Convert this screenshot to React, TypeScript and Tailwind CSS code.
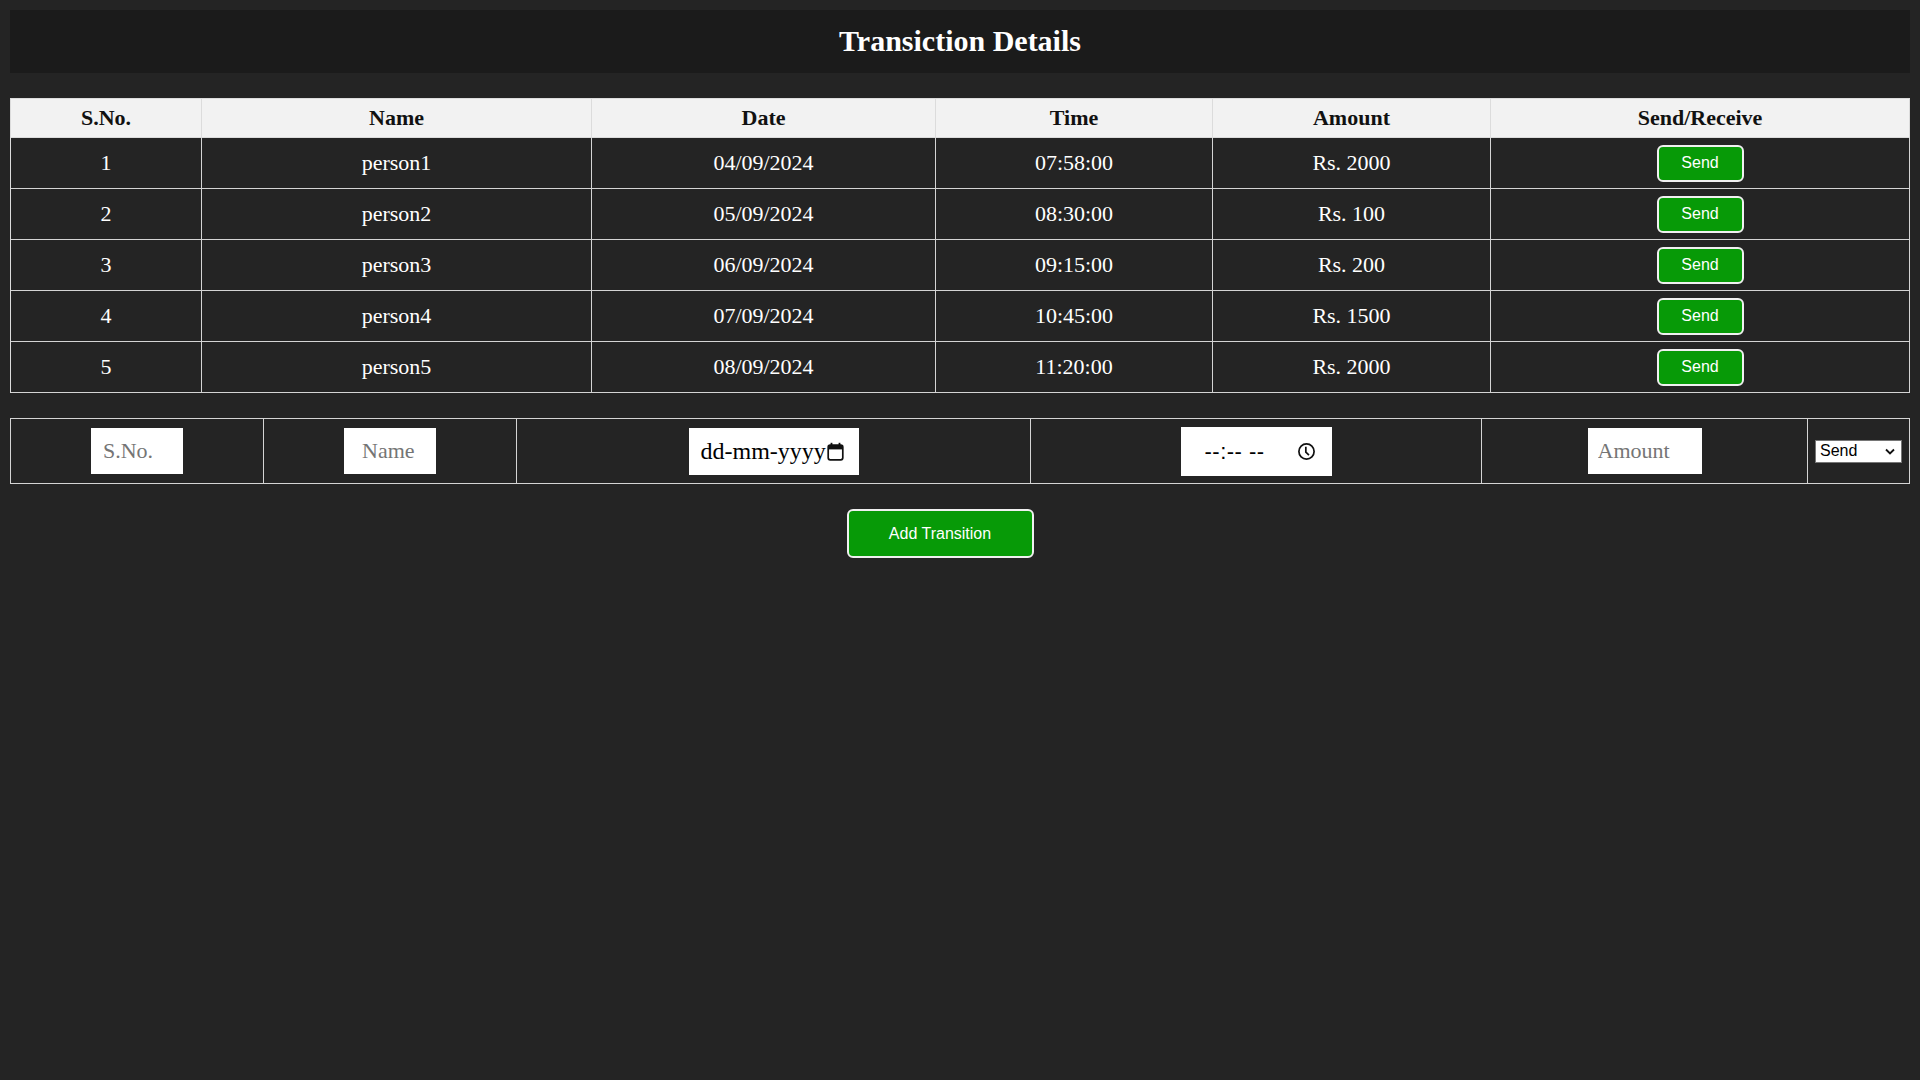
import React from "react";

const rows = [
  { n: 1, name: "person1", date: "04/09/2024", time: "07:58:00", amt: "Rs. 2000" },
  { n: 2, name: "person2", date: "05/09/2024", time: "08:30:00", amt: "Rs. 100" },
  { n: 3, name: "person3", date: "06/09/2024", time: "09:15:00", amt: "Rs. 200" },
  { n: 4, name: "person4", date: "07/09/2024", time: "10:45:00", amt: "Rs. 1500" },
  { n: 5, name: "person5", date: "08/09/2024", time: "11:20:00", amt: "Rs. 2000" },
];

const serif = "font-['Liberation_Serif','Times_New_Roman',serif]";
const sans = "font-['Liberation_Sans',Arial,sans-serif]";

function CalendarIcon() {
  return (
    <svg width="17" height="19" viewBox="0 0 17 19" className="shrink-0">
      <rect x="1.2" y="3.2" width="14.6" height="14.6" rx="2" fill="none" stroke="#111" strokeWidth="1.7" />
      <rect x="1.2" y="3.2" width="14.6" height="4.2" fill="#111" />
      <rect x="3.6" y="0.8" width="1.8" height="3.5" fill="#111" />
      <rect x="11.6" y="0.8" width="1.8" height="3.5" fill="#111" />
    </svg>
  );
}

function ClockIcon() {
  return (
    <svg width="19" height="19" viewBox="0 0 20 20" className="shrink-0">
      <circle cx="10" cy="10" r="8" fill="none" stroke="#111" strokeWidth="1.8" />
      <path d="M9.3 5v5.6l3.3 3.3" fill="none" stroke="#111" strokeWidth="1.8" />
    </svg>
  );
}

export default function App() {
  const th = `h-[39px] pb-[2px] flex items-center justify-center border-r border-b border-[#dcdcdc] bg-[#f2f2f2] text-[22px] font-bold text-[#111] ${serif}`;
  const td = `h-[51px] pb-[2px] flex items-center justify-center border-r border-b border-[#d4d4d4] text-[22px] text-white ${serif}`;
  const ic = "h-[65px] flex items-center justify-center border-r border-b border-[#d4d4d4]";
  return (
    <div className={`min-h-screen w-full bg-[#242424] px-[10px] pt-[10px] ${serif}`}>
      <div className="h-[63px] pb-[2px] bg-[#1b1b1b] flex items-center justify-center">
        <h1 className={`text-[30px] font-bold text-white ${serif}`}>Transiction Details</h1>
      </div>

      <div className="mt-[25px] grid grid-cols-[191px_390px_344px_277px_278px_419px] border-l border-t border-[#dcdcdc]">
        <div className={th}>S.No.</div>
        <div className={th}>Name</div>
        <div className={th}>Date</div>
        <div className={th}>Time</div>
        <div className={th}>Amount</div>
        <div className={th}>Send/Receive</div>
        {rows.map((r) => (
          <React.Fragment key={r.n}>
            <div className={td}>{r.n}</div>
            <div className={td}>{r.name}</div>
            <div className={td}>{r.date}</div>
            <div className={td}>{r.time}</div>
            <div className={td}>{r.amt}</div>
            <div className={`h-[51px] flex items-center justify-center border-r border-b border-[#d4d4d4]`}>
              <button
                className={`w-[87px] h-[37px] rounded-[6px] border-2 border-[#f0f0f0] bg-[#079a07] text-[16px] text-white ${sans}`}
              >
                Send
              </button>
            </div>
          </React.Fragment>
        ))}
      </div>

      <div className="mt-[25px] grid grid-cols-[253px_253px_514px_451px_326px_102px] border-l border-t border-[#d4d4d4]">
        <div className={ic}>
          <input
            placeholder="S.No."
            className={`w-[92px] h-[46px] bg-white px-[12px] text-[22px] text-black placeholder:text-[#757575] outline-none ${serif}`}
          />
        </div>
        <div className={ic}>
          <input
            placeholder="Name"
            className={`w-[92px] h-[46px] bg-white pl-[18px] pr-[6px] text-[22px] text-black placeholder:text-[#757575] outline-none ${serif}`}
          />
        </div>
        <div className={ic}>
          <div className={`w-[170px] h-[47px] bg-white pl-[12px] pr-[13px] flex items-center gap-[1px] text-[24px] text-black ${serif}`}>
            <span>dd-mm-yyyy</span>
            <CalendarIcon />
          </div>
        </div>
        <div className={ic}>
          <div className={`w-[151px] h-[49px] bg-white pl-[24px] pr-[16px] flex items-center justify-between text-[22px] text-black ${sans}`}>
            <span className="tracking-[0.5px]">--:-- --</span>
            <ClockIcon />
          </div>
        </div>
        <div className={ic}>
          <input
            placeholder="Amount"
            className={`w-[114px] h-[46px] bg-white px-[10px] text-[22px] text-black placeholder:text-[#757575] outline-none ${serif}`}
          />
        </div>
        <div className={ic}>
          <div className={`w-[87px] h-[23px] bg-white border border-[#767676] pl-[4px] pr-[6px] flex items-center justify-between text-[16px] text-black ${sans}`}>
            <span>Send</span>
            <svg width="10" height="7" viewBox="0 0 10 7">
              <path d="M1 1.5l4 4 4-4" fill="none" stroke="#111" strokeWidth="1.8" />
            </svg>
          </div>
        </div>
      </div>

      <div className="mt-[25px] flex justify-center pr-[40px]">
        <button
          className={`w-[187px] h-[49px] rounded-[6px] border-2 border-[#f0f0f0] bg-[#079a07] text-[16px] text-white ${sans}`}
        >
          Add Transition
        </button>
      </div>
    </div>
  );
}
